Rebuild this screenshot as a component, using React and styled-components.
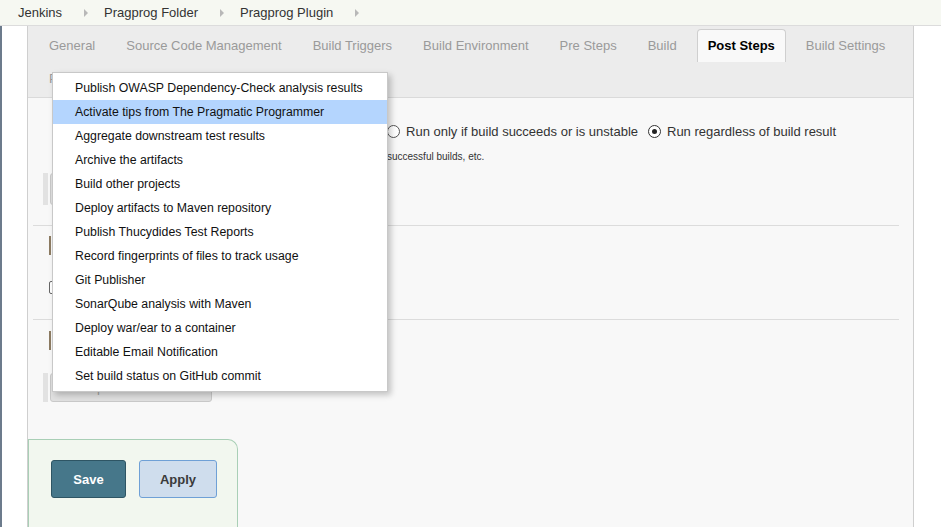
import styled, { createGlobalStyle, css } from 'styled-components';

const GlobalStyle = createGlobalStyle`
  html, body {
    margin: 0;
    padding: 0;
    height: 100%;
    overflow: hidden;
    background: #fff;
  }
  body {
    font-family: "Liberation Sans", Arial, sans-serif;
    font-size: 13px;
    color: #333;
  }
`;

const Breadcrumbs = styled.div`
  height: 25px;
  background: #f6f8f2;
  border-bottom: 1px solid #dcdcdc;
  display: flex;
  align-items: center;
  padding-left: 18px;
`;

const Crumb = styled.span`
  color: #333;
`;

const CrumbArrow = styled.span`
  width: 0;
  height: 0;
  border-top: 4px solid transparent;
  border-bottom: 4px solid transparent;
  border-left: 4px solid #b8b8b8;
  margin: 0 16px 0 22px;
`;

const Layout = styled.div`
  display: flex;
  height: calc(100vh - 26px);
`;

const Gutter = styled.div`
  width: 25px;
  border-left: 2px solid #6c7b8c;
  background: #fff;
`;

const Panel = styled.div`
  position: relative;
  width: 885px;
  border-left: 1px solid #cfcfcf;
  border-right: 1px solid #cfcfcf;
  background: #f8f8f8;
  display: flex;
  flex-direction: column;
`;

const TabBar = styled.div`
  background: #ececec;
  border-bottom: 1px solid #dadada;
  padding: 3px 0 2px 10px;
`;

const TabRow = styled.div`
  display: flex;
  gap: 9px;
  height: 33px;
`;

const Tab = styled.div`
  padding: 0 11px;
  line-height: 33px;
  color: #9a9a9a;
  white-space: nowrap;
  ${(p) =>
    p.$active &&
    css`
      padding: 0 10px;
      line-height: 32px;
      background: #f9f9f9;
      border: 1px solid #cfcfcf;
      border-bottom: none;
      border-radius: 4px 4px 0 0;
      color: #000;
      font-weight: bold;
    `}
`;

const Content = styled.div`
  padding: 0 14px 0 5px;
  display: flex;
  flex-direction: column;
`;

const RadioRow = styled.div`
  margin-top: 23px;
  height: 20px;
  display: flex;
  align-items: center;
  padding-left: 174px;
`;

const RadioOption = styled.label`
  display: flex;
  align-items: center;
  gap: 6px;
  margin-right: 10px;
  white-space: nowrap;
`;

const Radio = styled.span`
  width: 13px;
  height: 13px;
  box-sizing: border-box;
  border-radius: 50%;
  border: 1px solid #555;
  background: #fff;
  display: flex;
  align-items: center;
  justify-content: center;
  ${(p) =>
    p.$checked &&
    css`
      border-color: #333;
      &::after {
        content: '';
        width: 5px;
        height: 5px;
        border-radius: 50%;
        background: #222;
      }
    `}
`;

const HelpText = styled.div`
  margin-top: 10px;
  padding-left: 354px;
  font-size: 10px;
  line-height: 12px;
  color: #333;
`;

const ButtonBlock = styled.div`
  margin-top: ${(p) => p.$top}px;
  height: ${(p) => p.$height}px;
  display: flex;
`;

const SideBar = styled.div`
  width: 5px;
  background: #e2e2e2;
  margin-left: ${(p) => p.$left}px;
`;

const AddButton = styled.button`
  margin-left: 2px;
  width: 162px;
  background: #e0e0e0;
  border: 1px solid #c9c9c9;
  border-radius: 3px;
  color: #a0a0a0;
  font-family: "Liberation Sans", Arial, sans-serif;
  font-size: 13px;
  padding: 0;
`;

const Divider = styled.div`
  margin-top: ${(p) => p.$top}px;
  border-top: 1px solid #dcdcdc;
`;

const SectionHeader = styled.div`
  margin-top: ${(p) => p.$top}px;
  margin-left: 16px;
  height: 19px;
  line-height: 19px;
  border-left: 2px solid #8d7b62;
  padding-left: 8px;
  font-size: 15px;
  font-weight: bold;
  color: #333;
`;

const OptionRow = styled.div`
  margin-top: 22px;
  height: 20px;
  display: flex;
  align-items: center;
`;

const Checkbox = styled.span`
  width: 13px;
  height: 13px;
  box-sizing: border-box;
  border: 1px solid #666;
  border-radius: 2px;
  background: #fff;
  margin-left: 8px;
  margin-right: 6px;
`;

const BottomBar = styled.div`
  margin-top: 37px;
  width: 210px;
  flex: 1;
  background: #f2f7ef;
  border: 1px solid #a9cfb6;
  border-bottom: none;
  border-top-right-radius: 10px;
  padding: 20px 0 0 22px;
  box-sizing: border-box;
  display: flex;
  align-items: flex-start;
  gap: 13px;
`;

const ActionButton = styled.button`
  height: 38px;
  width: ${(p) => (p.$primary ? 75 : 78)}px;
  border-radius: 3px;
  font-family: "Liberation Sans", Arial, sans-serif;
  font-size: 13px;
  font-weight: bold;
  padding: 0;
  background: ${(p) => (p.$primary ? '#46778a' : '#cfdded')};
  border: 1px solid ${(p) => (p.$primary ? '#2e5564' : '#6fa0d6')};
  color: ${(p) => (p.$primary ? '#fff' : '#3a3a3a')};
`;

const Menu = styled.div`
  position: absolute;
  top: 46px;
  left: 24px;
  width: 334px;
  padding: 3px 0;
  background: #fff;
  border: 1px solid #c8c8c8;
  box-shadow: 3px 3px 6px rgba(0, 0, 0, 0.22);
  z-index: 10;
`;

const MenuItem = styled.div`
  height: 24px;
  line-height: 24px;
  padding-left: 22px;
  font-size: 12.3px;
  color: #111;
  white-space: nowrap;
  background: ${(p) => (p.$hover ? '#b4d5fe' : 'transparent')};
`;

const crumbs = ['Jenkins', 'Pragprog Folder', 'Pragprog Plugin'];

const tabs = [
  'General',
  'Source Code Management',
  'Build Triggers',
  'Build Environment',
  'Pre Steps',
  'Build',
  'Post Steps',
  'Build Settings',
];

const menuItems = [
  'Publish OWASP Dependency-Check analysis results',
  'Activate tips from The Pragmatic Programmer',
  'Aggregate downstream test results',
  'Archive the artifacts',
  'Build other projects',
  'Deploy artifacts to Maven repository',
  'Publish Thucydides Test Reports',
  'Record fingerprints of files to track usage',
  'Git Publisher',
  'SonarQube analysis with Maven',
  'Deploy war/ear to a container',
  'Editable Email Notification',
  'Set build status on GitHub commit',
];

export default function App() {
  return (
    <>
      <GlobalStyle />
      <Breadcrumbs>
        {crumbs.map((c) => (
          <>
            <Crumb key={c}>{c}</Crumb>
            <CrumbArrow />
          </>
        ))}
      </Breadcrumbs>
      <Layout>
        <Gutter />
        <Panel>
          <TabBar>
            <TabRow>
              {tabs.map((t) => (
                <Tab key={t} $active={t === 'Post Steps'}>
                  {t}
                </Tab>
              ))}
            </TabRow>
            <TabRow>
              <Tab>Post-build Actions</Tab>
            </TabRow>
          </TabBar>

          <Content>
            <RadioRow>
              <RadioOption>
                <Radio />
                Run only if build succeeds
              </RadioOption>
              <RadioOption>
                <Radio />
                Run only if build succeeds or is unstable
              </RadioOption>
              <RadioOption>
                <Radio $checked />
                Run regardless of build result
              </RadioOption>
            </RadioRow>
            <HelpText>successful builds, etc.</HelpText>
            <ButtonBlock $top={10} $height={32}>
              <SideBar $left={10} />
              <AddButton>Add post-build step</AddButton>
            </ButtonBlock>

            <Divider $top={20} />
            <SectionHeader $top={10}>Build Settings</SectionHeader>
            <OptionRow>
              <SideBar $left={3} />
              <Checkbox />
              E-mail Notification
            </OptionRow>

            <Divider $top={22} />
            <SectionHeader $top={11}>Post-build Actions</SectionHeader>
            <ButtonBlock $top={23} $height={29}>
              <SideBar $left={10} />
              <AddButton>Add post-build action</AddButton>
            </ButtonBlock>
          </Content>

          <BottomBar>
            <ActionButton $primary>Save</ActionButton>
            <ActionButton>Apply</ActionButton>
          </BottomBar>

          <Menu>
            {menuItems.map((item, i) => (
              <MenuItem key={item} $hover={i === 1}>
                {item}
              </MenuItem>
            ))}
          </Menu>
        </Panel>
      </Layout>
    </>
  );
}
